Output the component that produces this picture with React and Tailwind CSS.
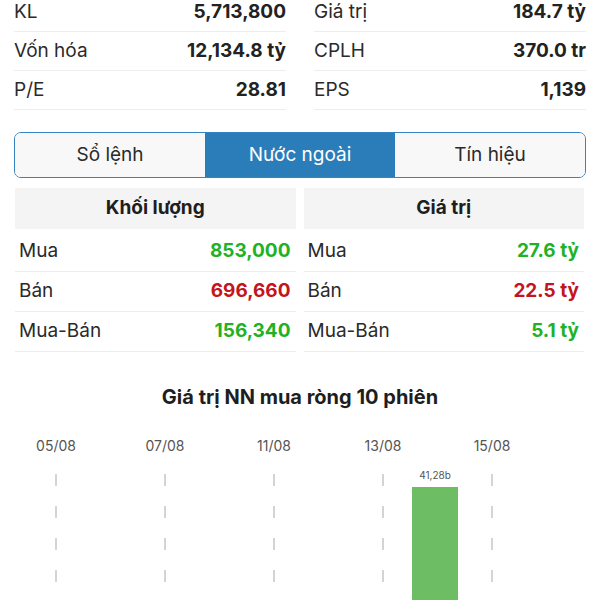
import React from "react";

const top = [
  [["KL", "5,713,800"], ["Vốn hóa", "12,134.8 tỷ"], ["P/E", "28.81"]],
  [["Giá trị", "184.7 tỷ"], ["CPLH", "370.0 tr"], ["EPS", "1,139"]],
];

const GREEN = "text-[#1fb226]";
const RED = "text-[#c4141e]";

const vol = [
  ["Mua", "853,000", GREEN],
  ["Bán", "696,660", RED],
  ["Mua-Bán", "156,340", GREEN],
];
const val = [
  ["Mua", "27.6 tỷ", GREEN],
  ["Bán", "22.5 tỷ", RED],
  ["Mua-Bán", "5.1 tỷ", GREEN],
];

const dates = [
  ["05/08", 56],
  ["07/08", 165],
  ["11/08", 274],
  ["13/08", 383],
  ["15/08", 492],
];

function Table({ title, rows }) {
  return (
    <div className="flex flex-col">
      <div className="h-[41px] bg-[#f4f4f4] flex items-center justify-center text-[19px] font-bold text-[#1e1e1e]">
        {title}
      </div>
      <div className="mt-[3px]">
        {rows.map(([l, v, c]) => (
          <div
            key={l}
            className="h-[40px] border-b border-[#ededed] flex items-center justify-between pl-[4px] pr-[5px] text-[19px]"
          >
            <span className="text-[#2a2a2a]">{l}</span>
            <span className={"font-bold " + c}>{v}</span>
          </div>
        ))}
      </div>
    </div>
  );
}

export default function App() {
  return (
    <div
      className="w-[600px] h-[600px] overflow-hidden bg-white text-[#222]"
      style={{ fontFamily: "Inter, 'Noto Sans', sans-serif" }}
    >
      <div className="-mt-[7px] px-[14px] grid grid-cols-2 gap-x-[28px]">
        {top.map((col, i) => (
          <div key={i}>
            {col.map(([l, v]) => (
              <div
                key={l}
                className="h-[39px] border-b border-[#ededed] flex items-center justify-between text-[19px]"
              >
                <span className="text-[#2a2a2a]">{l}</span>
                <span className="font-bold text-[#222]">{v}</span>
              </div>
            ))}
          </div>
        ))}
      </div>

      <div className="mt-[22px] mx-[14px] h-[46px] rounded-[7px] border-[1.5px] border-[#3583bf] grid grid-cols-3 overflow-hidden text-[19px]">
        <div className="bg-[#f8f8f8] flex items-center justify-center text-[#2a2a2a]">Sổ lệnh</div>
        <div className="bg-[#2b7dba] flex items-center justify-center text-white">Nước ngoài</div>
        <div className="bg-[#f8f8f8] flex items-center justify-center text-[#2a2a2a]">Tín hiệu</div>
      </div>

      <div className="mt-[10px] pl-[15px] pr-[16px] grid grid-cols-2 gap-x-[8px]">
        <Table title="Khối lượng" rows={vol} />
        <Table title="Giá trị" rows={val} />
      </div>

      <div className="mt-[32px] text-center text-[20px] font-bold text-[#1e1e1e] leading-[26px]">
        Giá trị NN mua ròng 10 phiên
      </div>

      <div className="relative h-[200px]">
        {dates.map(([d, x]) => (
          <div
            key={d}
            className="absolute top-[27px] w-[60px] text-center text-[14px] text-[#555] leading-[18px]"
            style={{ left: x - 30 }}
          >
            {d}
          </div>
        ))}
        <svg className="absolute left-0 top-0" width="600" height="200">
          {dates.map(([d, x]) => (
            <line
              key={d}
              x1={x}
              x2={x}
              y1="64"
              y2="200"
              stroke="#c6c6c6"
              strokeWidth="1.5"
              strokeDasharray="12 20"
            />
          ))}
          <rect x="412" y="77" width="46" height="130" fill="#6dbd64" />
        </svg>
        <div className="absolute left-[405px] w-[60px] top-[58px] text-center text-[10px] text-[#555] leading-[14px]">
          41,28b
        </div>
      </div>
    </div>
  );
}
